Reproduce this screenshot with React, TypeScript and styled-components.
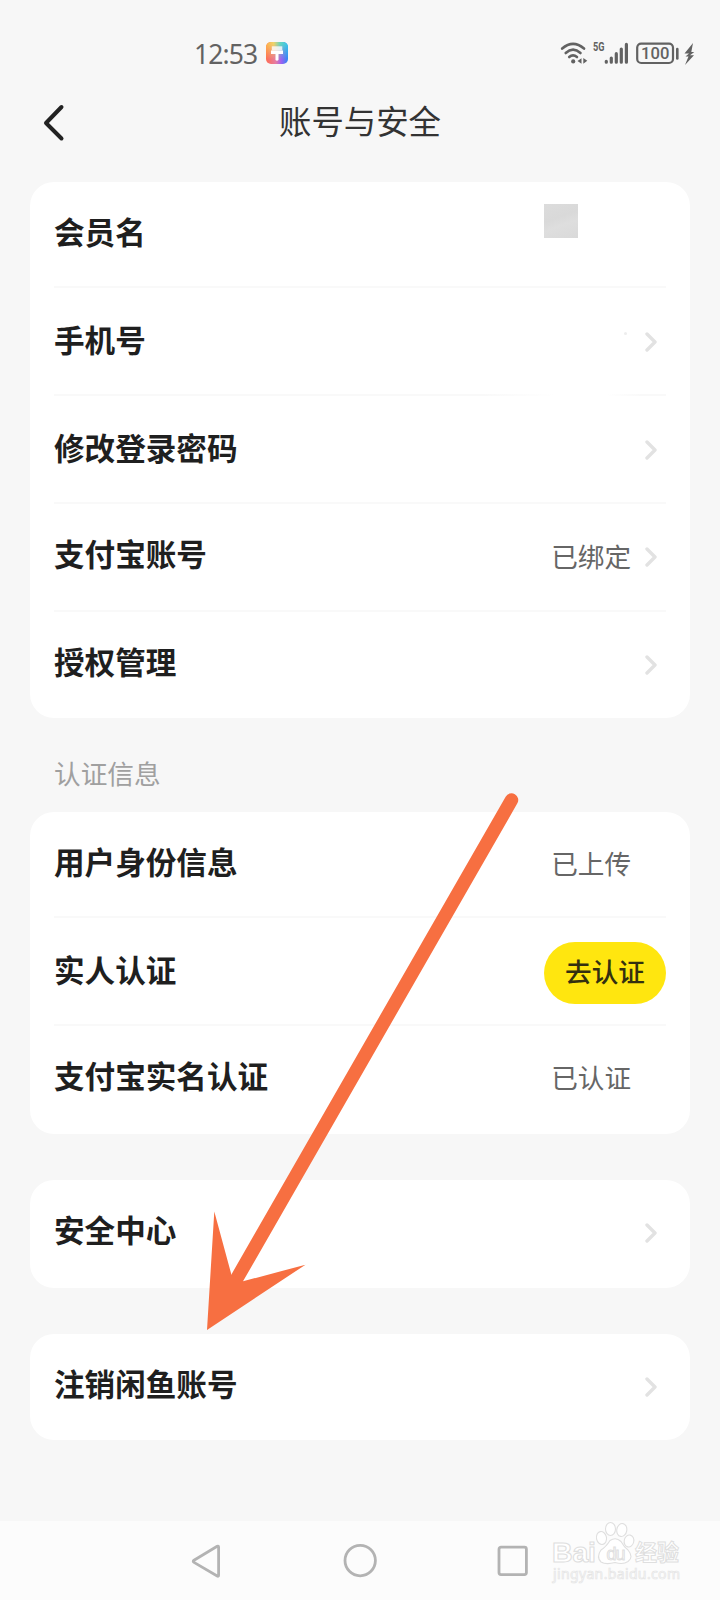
import React from 'react';
import styled, { createGlobalStyle } from 'styled-components';

const GlobalStyle = createGlobalStyle`
  * { box-sizing: border-box; }
  body {
    margin: 0;
    background: #f7f7f7;
    font-family: "Noto Sans CJK SC", sans-serif;
  }
`;

const Screen = styled.div`
  position: relative;
  width: 720px;
  height: 1600px;
  overflow: hidden;
  display: flex;
  flex-direction: column;
  background: #f7f7f7;
`;

const StatusBar = styled.header`
  height: 84px;
  padding: 22px 22px 0 194px;
  display: flex;
  align-items: center;
  justify-content: space-between;
`;

const StatusGroup = styled.div<{ $gap: number; $drop?: number }>`
  display: flex;
  align-items: center;
  gap: ${(p) => p.$gap}px;
  height: 62px;
  padding-top: ${(p) => p.$drop ?? 0}px;
`;

const Clock = styled.span`
  font-family: "Noto Sans", sans-serif;
  font-size: 26.5px;
  line-height: 30px;
  letter-spacing: -0.9px;
  padding-top: 2px;
  color: #626262;
`;

const TitleBar = styled.div`
  height: 98px;
  padding: 0 30px;
  display: grid;
  grid-template-columns: 80px 1fr 80px;
  align-items: start;
`;

const BackButton = styled.button`
  border: 0;
  padding: 19px 0 0 12px;
  background: none;
  display: flex;
`;

const Title = styled.h1`
  margin: 0;
  text-align: center;
  font-size: 32.4px;
  line-height: 72px;
  font-weight: 400;
  color: #333;
`;

const Card = styled.section<{ $gap?: number }>`
  margin: 0 30px ${(p) => p.$gap ?? 0}px;
  padding: 0 24px;
  border-radius: 24px;
  background: #fff;
`;

const Row = styled.div<{ $height: number; $line?: boolean }>`
  height: ${(p) => p.$height}px;
  display: flex;
  align-items: flex-start;
  justify-content: space-between;
  border-bottom: ${(p) => (p.$line ? '2px solid #f9f9f9' : '0')};
`;

const Label = styled.span<{ $top: number }>`
  font-size: 30.6px;
  line-height: 44px;
  padding-top: ${(p) => p.$top}px;
  font-weight: 700;
  color: #1f1f1f;
`;

const Trailing = styled.div<{ $top: number; $right: number }>`
  display: flex;
  align-items: center;
  gap: 14px;
  padding: ${(p) => p.$top}px ${(p) => p.$right}px 0 0;
`;

const Value = styled.span`
  font-size: 26.6px;
  line-height: 44px;
  margin-top: -2px;
  color: #666;
`;

const MaskBlock = styled.span`
  width: 34px;
  height: 34px;
  background: linear-gradient(160deg, #dcdcdc, #d9d9d9 40%, #dedede 60%, #d9d9d9);
`;

const Dot = styled.span`
  width: 3px;
  height: 3px;
  margin: 0 4px 18px 0;
  border-radius: 50%;
  background: #ededed;
`;

const VerifyButton = styled.button`
  width: 122px;
  height: 62px;
  border: 0;
  border-radius: 31px;
  padding: 0 0 4px;
  background: #ffe60f;
  color: #33300f;
  font: 500 26.6px/40px "Noto Sans CJK SC", sans-serif;
`;

const SectionTitle = styled.h2`
  margin: 0;
  height: 94px;
  padding: 0 54px;
  font-size: 26.7px;
  line-height: 110px;
  font-weight: 400;
  color: #a0a0a0;
`;

const NavBar = styled.nav`
  height: 79px;
  margin-top: auto;
  background: #fcfcfc;
  padding: 1px 191px 0 190px;
  display: flex;
  align-items: center;
  justify-content: space-between;
`;

const Overlay = styled.svg<{ $left: number; $top: number }>`
  position: absolute;
  left: ${(p) => p.$left}px;
  top: ${(p) => p.$top}px;
  pointer-events: none;
`;

const Chevron = () => (
  <svg width="13" height="22" viewBox="0 0 13 22" fill="none" stroke="#e2e2e2" strokeWidth="3.4" strokeLinecap="round" strokeLinejoin="round">
    <path d="M2 3L10 11L2 19" />
  </svg>
);

const ThemeIcon = () => (
  <svg width="22" height="22" viewBox="0 0 22 22">
    <defs>
      <linearGradient id="themeBase" x1="0" y1="0" x2="1" y2="0">
        <stop offset="0" stopColor="#ff6d52" />
        <stop offset=".45" stopColor="#e57ca5" />
        <stop offset=".7" stopColor="#9a62f2" />
        <stop offset="1" stopColor="#2f86f5" />
      </linearGradient>
      <linearGradient id="themeTop" x1="0" y1="0" x2="1" y2="0">
        <stop offset="0" stopColor="#ffb04a" />
        <stop offset=".35" stopColor="#eed36a" />
        <stop offset=".65" stopColor="#65d4c0" />
        <stop offset="1" stopColor="#35c5ec" />
      </linearGradient>
      <linearGradient id="themeFade" x1="0" y1="0" x2="0" y2="1">
        <stop offset="0.1" stopColor="#fff" />
        <stop offset=".8" stopColor="#000" />
      </linearGradient>
      <mask id="themeMask"><rect width="22" height="22" fill="url(#themeFade)" /></mask>
    </defs>
    <rect width="22" height="22" rx="5" fill="url(#themeBase)" />
    <rect width="22" height="22" rx="5" fill="url(#themeTop)" mask="url(#themeMask)" />
    <path d="M5.8 4.3h10.5v4.2H5.8z" fill="#fff" opacity=".8" />
    <path d="M5 8.5h12v3.6h-4.5V18q-1.5 1.6-3 0v-5.9H5z" fill="#fff" />
  </svg>
);

const StatusIcons = () => (
  <svg width="138" height="30" viewBox="0 0 138 30" fill="none" stroke="#626262">
    <g strokeWidth="2.6" strokeLinecap="round">
      <path d="M2.2 8.6Q13 -.8 24 8.6" />
      <path d="M5.7 13Q13 6.4 20.5 13" />
      <path d="M9.2 17Q13 13.6 17 17" />
    </g>
    <circle cx="13.2" cy="21.4" r="2.1" fill="#626262" stroke="none" />
    <path d="M17.5 21l4-2.8v5.6zM23.3 18l4 2.8-4 3z" fill="#626262" stroke="none" />
    <text x="33" y="11.2" fontFamily="Roboto, sans-serif" fontWeight="700" fontSize="12.8" textLength="11.5" lengthAdjust="spacingAndGlyphs" fill="#626262" stroke="none">5G</text>
    <g strokeWidth="3.2" strokeLinecap="round">
      <path d="M46.3 21.3v.9M51.3 18v4.2M56.3 13.7v8.5M61.3 9v13.2M66.4 4.4v17.8" />
    </g>
    <rect x="77.2" y="3.6" width="35.8" height="19.4" rx="4" strokeWidth="2.2" />
    <text x="81" y="19.2" fontFamily="Roboto, sans-serif" fontWeight="500" fontSize="16.6" textLength="28.5" fill="#626262" stroke="none">100</text>
    <path d="M117.3 9v9.5" strokeWidth="2.6" strokeLinecap="round" />
    <path d="M133 3L124.5 13.5h4.5l-3.5 3h3L125 25l9-9.8h-4l4.3-3.2h-3z" fill="#626262" stroke="none" />
  </svg>
);

interface ItemProps {
  label: string;
  height: number;
  line?: boolean;
  labelTop?: number;
  top?: number;
  right?: number;
  children?: React.ReactNode;
}

const Item = ({ label, height, line, labelTop = 27, top = 30, right = 8, children }: ItemProps) => (
  <Row $height={height} $line={line}>
    <Label $top={labelTop}>{label}</Label>
    <Trailing $top={top} $right={right}>{children}</Trailing>
  </Row>
);

const FadedRowItem = styled.div`
  > div {
    border-image: linear-gradient(90deg, #f9f9f9 70%, #fff 82%, #fff 90%, #f9f9f9 96%) 1;
  }
`;

export default function App() {
  return (
    <Screen>
      <GlobalStyle />
      <StatusBar>
        <StatusGroup $gap={9}>
          <Clock>12:53</Clock>
          <ThemeIcon />
        </StatusGroup>
        <StatusGroup $gap={0} $drop={3}>
          <StatusIcons />
        </StatusGroup>
      </StatusBar>

      <TitleBar>
        <BackButton aria-label="返回">
          <svg width="24" height="40" viewBox="0 0 24 40" fill="none" stroke="#222" strokeWidth="4" strokeLinecap="round" strokeLinejoin="round">
            <path d="M19.5 4L4 20L19.5 35.5" />
          </svg>
        </BackButton>
        <Title>账号与安全</Title>
      </TitleBar>

      <Card>
        <Item label="会员名" height={106} line top={22} right={88}><MaskBlock /></Item>
        <FadedRowItem>
          <Item label="手机号" height={108} line labelTop={29} top={43}><Dot /><Chevron /></Item>
        </FadedRowItem>
        <Item label="修改登录密码" height={108} line labelTop={29} top={43}><Chevron /></Item>
        <Item label="支付宝账号" height={108} line top={32}><Value>已绑定</Value><Chevron /></Item>
        <Item label="授权管理" height={106} top={42}><Chevron /></Item>
      </Card>

      <SectionTitle>认证信息</SectionTitle>

      <Card $gap={46}>
        <Item label="用户身份信息" height={106} line top={31} right={35}><Value>已上传</Value></Item>
        <Item label="实人认证" height={108} line labelTop={29} top={24} right={0}><VerifyButton>去认证</VerifyButton></Item>
        <Item label="支付宝实名认证" height={108} top={31} right={35}><Value>已认证</Value></Item>
      </Card>

      <Card $gap={46}>
        <Item label="安全中心" height={108} top={42}><Chevron /></Item>
      </Card>

      <Card>
        <Item label="注销闲鱼账号" height={106} top={42}><Chevron /></Item>
      </Card>

      <NavBar>
        <svg width="32" height="36" viewBox="0 0 32 36" fill="none" stroke="#b3b3b3" strokeWidth="2.8" strokeLinejoin="round">
          <path d="M27.2 3.2Q28.6 2.6 28.6 4.3V32Q28.6 33.8 27.2 33L4 19.4Q2.4 18.3 4 17.2Z" />
        </svg>
        <svg width="36" height="36" viewBox="0 0 36 36" fill="none" stroke="#b3b3b3" strokeWidth="2.8">
          <circle cx="18.2" cy="17.6" r="15.2" />
        </svg>
        <svg width="32" height="36" viewBox="0 0 32 36" fill="none" stroke="#b3b3b3" strokeWidth="2.8">
          <rect x="2" y="4.2" width="27.4" height="27.4" rx="2" />
        </svg>
      </NavBar>

      <Overlay $left={200} $top={785} width="330" height="550" viewBox="200 785 330 550">
        <path d="M511.5 800L236 1280" stroke="#f76f41" strokeWidth="13.5" strokeLinecap="round" />
        <path d="M207 1330L214.3 1211.5L231.5 1275L243 1281.3L305.5 1264.7Z" fill="#f76f41" />
      </Overlay>

      <Overlay $left={545} $top={1515} width="145" height="72" viewBox="545 1515 145 72">
        <g fill="#fff" stroke="#dfdfdf" strokeWidth="1.1">
          <text x="552" y="1561.8" fontFamily="Liberation Sans, sans-serif" fontWeight="700" fontSize="28.5" textLength="44">Bai</text>
          <ellipse cx="601.5" cy="1538" rx="5" ry="6.5" transform="rotate(-12 601.5 1538)" />
          <ellipse cx="610.5" cy="1529" rx="5" ry="6.5" />
          <ellipse cx="621.8" cy="1530" rx="5" ry="6.5" transform="rotate(10 621.8 1530)" />
          <ellipse cx="629" cy="1541" rx="4.8" ry="6" transform="rotate(12 629 1541)" />
          <path d="M610 1540.5Q616 1536.5 621 1541.5Q624 1547 628 1550Q634 1557 628 1561.5Q623 1565 615 1562.5Q606 1565 601 1562Q596 1557 601 1550Q606 1547 610 1540.5Z" />
          <text x="606.5" y="1559.5" fontFamily="Liberation Sans, sans-serif" fontSize="18" textLength="19" strokeWidth="1">du</text>
          <text x="635" y="1560" fontWeight="700" fontSize="22" textLength="44" strokeWidth="1">经验</text>
          <text x="553" y="1579" fontFamily="Noto Sans, sans-serif" fontSize="14" textLength="127" strokeWidth=".7" stroke="#e4e4e4">jingyan.baidu.com</text>
        </g>
      </Overlay>
    </Screen>
  );
}
